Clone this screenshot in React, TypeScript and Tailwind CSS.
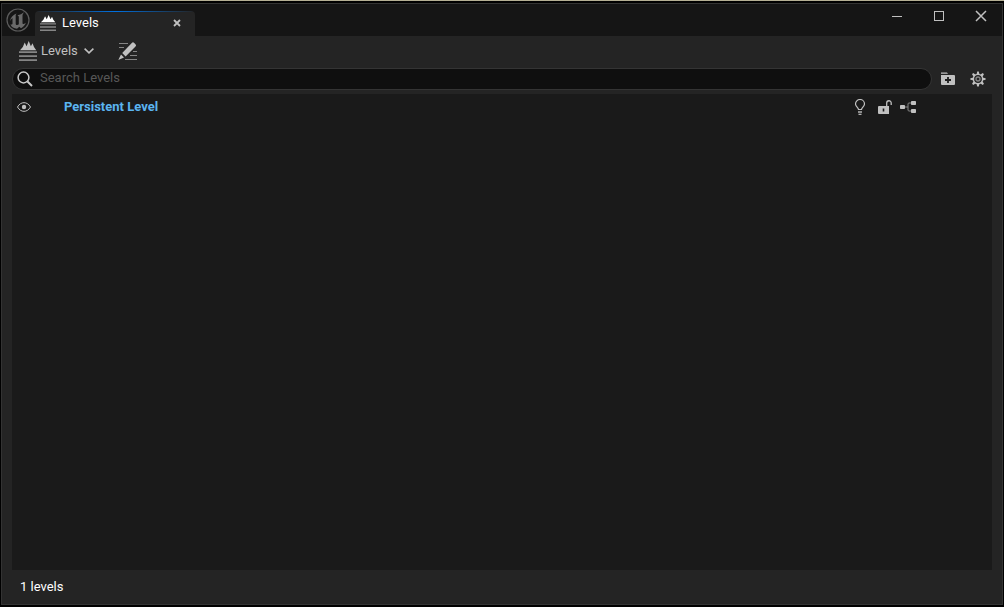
import React, { useState } from 'react';

const LogoIcon = () => (
  <svg width="26" height="26" viewBox="0 0 26 26" aria-hidden="true">
    <circle cx="13" cy="13" r="11" fill="#161616" stroke="#5c5c5c" strokeWidth="1.2" />
    <path
      d="M5 14c.5-3.500 3-6 6.500-7.500l-.8 1.500v8.500c0 1 .6 1.500 1.400 1.500.6 0 1.200-.3 1.700-.8V9.500l-1.300-1.200c2.500-.5 4.500-1.300 6.500-3-.8 1.300-1.500 2.200-1.500 3.300v7.600c.2.700.7.9 1.200.8.8-.2 1.600-.7 2.200-1.300-.8 2.600-2.900 4.500-4.900 5.500l-1.700-1.500-2.300 2c-3.100 0-5.500-1.500-6.600-4.400.9.500 2.100.5 2.100-.8v-5.600c-1.100.8-1.700 1.700-2.500 3.100z"
      fill="#6a6a6a"
    />
  </svg>
);

const LevelsIcon = ({ peak, className }: { peak: string; className: string }) => (
  <svg className={className} viewBox="0 0 18 20" preserveAspectRatio="none" aria-hidden="true">
    <path d="M1 9.200L3.800 6 5.700 1.500 7.600 5.200 9.700 0l2.200 5.200L13.500 2.300 15 6l2.200 3.200z" fill={peak} />
    <path d="M0 10.200h18V12H0zM0 14.200h18V16H0zM0 18.200h18V20H0z" fill="#858585" />
  </svg>
);

const CloseTabIcon = () => (
  <svg width="8" height="8" viewBox="0 0 8 8" stroke="#c0c0c0" strokeWidth="1.8" aria-hidden="true">
    <path d="M1 1l6 6M7 1L1 7" />
  </svg>
);

const ChevronIcon = () => (
  <svg width="10" height="6" viewBox="0 0 10 6" fill="none" stroke="#c0c0c0" strokeWidth="1.6" aria-hidden="true">
    <path d="M.6.700L5 4.800 9.400.700" />
  </svg>
);

const EditIcon = () => (
  <svg width="20" height="20" viewBox="0 0 20 20" aria-hidden="true">
    <path d="M1 2.500h9M1 6.500h5M15 10.500h4M12 14.500h7M7 18.500h12" stroke="#858585" />
    <path d="M4.200 12L13.800 1.900q1.200-1.200 2.400 0l1.300 1.300q1.200 1.200 0 2.400L7.600 15.400z" fill="#c0c0c0" />
    <path d="M3 13.500l3 3L.3 19z" fill="#c0c0c0" />
  </svg>
);

const SearchIcon = () => (
  <svg width="16" height="16" viewBox="0 0 16 16" fill="none" stroke="#c8c8c8" aria-hidden="true">
    <circle cx="6.500" cy="6.500" r="5.400" strokeWidth="1.500" />
    <path d="M10.500 10.500l4.500 4.500" strokeWidth="2" />
  </svg>
);

const AddFolderIcon = () => (
  <svg width="14" height="14" viewBox="0 0 14 14" aria-hidden="true">
    <path d="M0 .5h6l1 1.300H0z" fill="#c0c0c0" />
    <path d="M0 3h13a1 1 0 0 1 1 1v8a1 1 0 0 1-1 1H1a1 1 0 0 1-1-1z" fill="#c0c0c0" />
    <path d="M7 5v6M4 8h6" stroke="#1f1f1f" strokeWidth="1.800" />
  </svg>
);

const teeth = [0, 45, 90, 135, 180, 225, 270, 315];

const GearIcon = () => (
  <svg width="16" height="16" viewBox="0 0 16 16" fill="none" stroke="#c0c0c0" aria-hidden="true">
    {teeth.map((angle) => (
      <path key={angle} d="M6.500 3.500L7.200.4h1.600l.7 3.100z" fill="#c0c0c0" stroke="none" transform={`rotate(${angle} 8 8)`} />
    ))}
    <circle cx="8" cy="8" r="4.600" strokeWidth="1.400" />
    <circle cx="8" cy="8" r="2" stroke="#858585" strokeWidth="1.300" />
  </svg>
);

const EyeIcon = () => (
  <svg width="14" height="10" viewBox="0 0 14 10" fill="none" stroke="#c0c0c0" aria-hidden="true">
    <path d="M.5 5C3.700-.8 10.300-.8 13.500 5 10.300 10.800 3.700 10.800.5 5z" />
    <circle cx="7" cy="5" r="2.200" fill="#c0c0c0" stroke="none" />
  </svg>
);

const BulbIcon = () => (
  <svg width="10" height="16" viewBox="0 0 10 16" fill="none" stroke="#c0c0c0" aria-hidden="true">
    <path d="M3.500 10.500c0-2-3-3-3-5.500a4.500 4.500 0 0 1 9 0c0 2.500-3 3.500-3 5.500z" strokeWidth="1.200" />
    <path d="M3 13h4" strokeWidth="1.400" />
    <path d="M3.500 15.300h3" strokeWidth="1.200" />
  </svg>
);

const UnlockIcon = () => (
  <svg width="14" height="14" viewBox="0 0 14 14" aria-hidden="true">
    <path d="M8.700 6.500V3a2.200 2.200 0 0 1 4.500 0v2" fill="none" stroke="#c0c0c0" strokeWidth="1.300" />
    <path fillRule="evenodd" d="M1 6h10v8H1a1 1 0 0 1-1-1V7a1 1 0 0 1 1-1zm3.700 2.500v3h1.600v-3z" fill="#c0c0c0" />
  </svg>
);

const HierarchyIcon = () => (
  <svg width="16" height="12" viewBox="0 0 16 12" aria-hidden="true">
    <path d="M4 6h4M11 2H9a1 1 0 0 0-1 1v6a1 1 0 0 0 1 1h2" fill="none" stroke="#858585" />
    <g fill="#c0c0c0">
      <rect x="0" y="4" width="5" height="4" rx=".8" />
      <rect x="11" y="0" width="5" height="4" rx=".8" />
      <rect x="11" y="8" width="5" height="4" rx=".8" />
    </g>
  </svg>
);

const TitleBar = () => (
  <header className="flex h-8 bg-[#151515]">
    <div className="flex w-[33px] items-start pt-[3px] pl-[3px]">
      <LogoIcon />
    </div>
    <div className="mt-[7px] flex w-40 flex-col overflow-hidden rounded-t bg-[#242424]">
      <div className="h-px shrink-0 bg-linear-to-r from-transparent via-[#0070e0] to-transparent" />
      <div className="flex flex-1 items-start gap-1.5 pt-[3px] pr-3.5 pl-[5px]">
        <LevelsIcon peak="#fff" className="h-4 w-4" />
        <h1 className="flex-1 text-white">Levels</h1>
        <button type="button" aria-label="Close tab" className="flex h-4 items-center">
          <CloseTabIcon />
        </button>
      </div>
    </div>
    <div className="ml-auto flex h-6 items-center pr-px">
      <button type="button" aria-label="Minimize" className="flex w-10 justify-center">
        <span className="h-px w-2.5 bg-[#c0c0c0]" />
      </button>
      <button type="button" aria-label="Maximize" className="flex w-11 justify-center">
        <span className="h-2.5 w-2.5 border border-[#c0c0c0]" />
      </button>
      <button type="button" aria-label="Close window" className="flex w-10 justify-center">
        <svg width="12" height="12" viewBox="0 0 12 12" stroke="#c0c0c0" strokeWidth="1.500" aria-hidden="true">
          <path d="M1 1l10 10M11 1L1 11" />
        </svg>
      </button>
    </div>
  </header>
);

const LevelRow = ({ name }: { name: string }) => (
  <li className="flex h-[26px] items-center pr-19 pl-1">
    <button type="button" aria-label="Toggle visibility" className="mr-8 flex w-4 justify-center">
      <EyeIcon />
    </button>
    <span className="flex-1 font-bold text-[#5ab4f0]">{name}</span>
    <div className="flex items-center gap-2">
      <button type="button" aria-label="Lighting scenario" className="flex w-4 justify-center">
        <BulbIcon />
      </button>
      <button type="button" aria-label="Lock" className="flex w-4 justify-end">
        <UnlockIcon />
      </button>
      <button type="button" aria-label="Level blueprint" className="flex w-4 justify-center">
        <HierarchyIcon />
      </button>
    </div>
  </li>
);

export default function App() {
  const [search, setSearch] = useState('');

  return (
    <div className="flex h-screen flex-col border-t border-[#b5af94] bg-black px-px pt-0.5 pb-0.5 font-['Roboto',sans-serif] text-[13px] leading-4">
      <div className="flex flex-1 flex-col border border-[#333] bg-[#242424]">
        <TitleBar />

        <div className="flex h-8 items-start gap-6 pt-1 pl-[17px]">
          <button type="button" className="flex h-[22px] items-center gap-1 text-[#c0c0c0]">
            <LevelsIcon peak="#c0c0c0" className="h-5 w-[18px]" />
            <span className="pr-0.5 pb-px">Levels</span>
            <ChevronIcon />
          </button>
          <button type="button" aria-label="Level details" className="flex h-[22px] items-center">
            <EditIcon />
          </button>
        </div>

        <div className="flex items-center pr-4 pl-2.5">
          <label className="flex h-[22px] flex-1 items-center gap-[7px] rounded-full border border-[#343434] bg-[#0f0f0f] px-1">
            <SearchIcon />
            <input
              type="text"
              aria-label="Search Levels"
              placeholder="Search Levels"
              value={search}
              onChange={(e) => setSearch(e.target.value)}
              className="flex-1 pb-0.5 text-[#c0c0c0] outline-none placeholder:text-[#575757]"
            />
          </label>
          <button type="button" aria-label="New folder" className="ml-[9px]">
            <AddFolderIcon />
          </button>
          <button type="button" aria-label="Settings" className="ml-[15px]">
            <GearIcon />
          </button>
        </div>

        <ul className="mx-2.5 mt-1 flex-1 bg-[#1a1a1a]">
          <LevelRow name="Persistent Level" />
        </ul>

        <footer className="flex h-[34px] items-center px-[18px] text-white">1 levels</footer>
      </div>
    </div>
  );
}
